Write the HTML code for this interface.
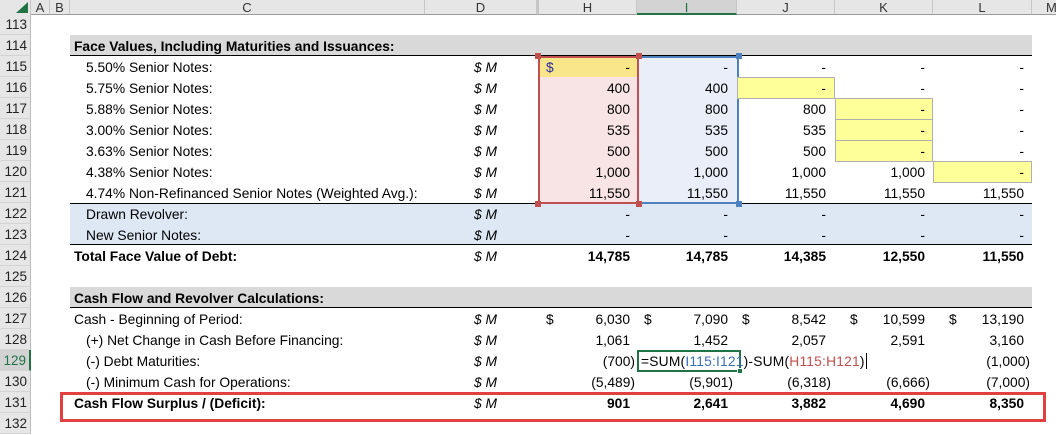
<!DOCTYPE html><html><head><style>
body{margin:0;width:1056px;height:423px;overflow:hidden;background:#fff;font-family:"Liberation Sans",sans-serif;font-size:13.8px;color:#000;position:relative}
div{position:absolute;box-sizing:border-box}
.ch{top:0;height:15px;background:#e6e6e6;border-right:1px solid #c6c6c6;border-bottom:1px solid #9b9b9b;text-align:center;line-height:15px;font-size:13px;color:#333}
.rn{left:0;width:31px;height:21px;background:#e6e6e6;border-right:1px solid #bcbcbc;border-bottom:1px solid #d4d4d4;text-align:right;padding-right:3px;line-height:22px;font-size:13.5px;color:#222}
.t{line-height:23px;height:21px;white-space:nowrap}
.n{line-height:23px;height:21px;text-align:right;white-space:nowrap}
.b{font-weight:bold}
.u{font-style:italic;left:474px}
</style></head><body>
<div class="ch" style="left:0;width:31px"></div>
<div style="left:16px;top:2px;width:0;height:0;border-left:12px solid transparent;border-bottom:11px solid #217346"></div>
<div class="ch" style="left:31px;width:19px">A</div>
<div class="ch" style="left:50px;width:20px">B</div>
<div class="ch" style="left:70px;width:355px">C</div>
<div class="ch" style="left:425px;width:112px">D</div>
<div class="ch" style="left:537px;width:100px;border-left:2px solid #c6c6c6">H</div>
<div class="ch" style="left:637px;width:100px;background:#d3d3d3;border-bottom:2px solid #217346;color:#217346">I</div>
<div class="ch" style="left:737px;width:98px">J</div>
<div class="ch" style="left:835px;width:98px">K</div>
<div class="ch" style="left:933px;width:99px">L</div>
<div class="ch" style="left:1032px;width:30px;text-align:left;padding-left:14px">M</div>

<div class="rn" style="top:14px">113</div><div class="rn" style="top:35px">114</div><div class="rn" style="top:56px">115</div><div class="rn" style="top:77px">116</div><div class="rn" style="top:98px">117</div><div class="rn" style="top:119px">118</div><div class="rn" style="top:140px">119</div><div class="rn" style="top:161px">120</div><div class="rn" style="top:182px">121</div><div class="rn" style="top:203px">122</div><div class="rn" style="top:224px">123</div><div class="rn" style="top:245px">124</div><div class="rn" style="top:266px">125</div><div class="rn" style="top:287px">126</div><div class="rn" style="top:308px">127</div><div class="rn" style="top:329px">128</div><div class="rn" style="top:350px;background:#d3d3d3;color:#217346;border-right:2px solid #217346">129</div><div class="rn" style="top:371px">130</div><div class="rn" style="top:392px">131</div><div class="rn" style="top:413px">132</div>

<div style="left:70px;top:35px;width:962px;height:21px;background:#d9d9d9;border-bottom:1px solid #000"></div>
<div style="left:70px;top:287px;width:962px;height:21px;background:#d9d9d9;border-bottom:1px solid #000"></div>
<div style="left:70px;top:203px;width:962px;height:42px;background:#dde8f4;border-top:1px solid #000;border-bottom:1px solid #000"></div>

<div style="left:538px;top:56px;width:101px;height:148px;background:#f8e4e4"></div>
<div style="left:540px;top:57px;width:97px;height:20px;background:#f9e58a"></div>
<div style="left:639px;top:56px;width:100px;height:148px;background:#e9eef8"></div>
<div style="left:538px;top:56px;width:101px;height:148px;border:2px solid #c0504d"></div>
<div style="left:639px;top:56px;width:100px;height:148px;border:2px solid #4f81bd;border-left:none"></div>
<div style="left:535px;top:53px;width:6px;height:6px;background:#c0504d"></div>
<div style="left:636px;top:53px;width:6px;height:6px;background:#c0504d"></div>
<div style="left:736px;top:53px;width:6px;height:6px;background:#4f81bd"></div>
<div style="left:535px;top:201px;width:6px;height:6px;background:#c0504d"></div>
<div style="left:636px;top:201px;width:6px;height:6px;background:#c0504d"></div>
<div style="left:736px;top:201px;width:6px;height:6px;background:#4f81bd"></div>

<div style="left:737px;top:77px;width:98px;height:22px;background:#ffff99;border:1px solid #b0b0b0"></div>
<div style="left:835px;top:98px;width:98px;height:22px;background:#ffff99;border:1px solid #b0b0b0"></div>
<div style="left:835px;top:119px;width:98px;height:22px;background:#ffff99;border:1px solid #b0b0b0"></div>
<div style="left:835px;top:140px;width:98px;height:22px;background:#ffff99;border:1px solid #b0b0b0"></div>
<div style="left:933px;top:161px;width:99px;height:22px;background:#ffff99;border:1px solid #b0b0b0"></div>

<div class="t b" style="left:74px;top:35px">Face Values, Including Maturities and Issuances:</div>
<div class="t" style="left:86px;top:56px">5.50% Senior Notes:</div>
<div class="t" style="left:86px;top:77px">5.75% Senior Notes:</div>
<div class="t" style="left:86px;top:98px">5.88% Senior Notes:</div>
<div class="t" style="left:86px;top:119px">3.00% Senior Notes:</div>
<div class="t" style="left:86px;top:140px">3.63% Senior Notes:</div>
<div class="t" style="left:86px;top:161px">4.38% Senior Notes:</div>
<div class="t" style="left:86px;top:182px">4.74% Non-Refinanced Senior Notes (Weighted Avg.):</div>
<div class="t" style="left:86px;top:203px">Drawn Revolver:</div>
<div class="t" style="left:86px;top:224px">New Senior Notes:</div>
<div class="t b" style="left:74px;top:245px">Total Face Value of Debt:</div>
<div class="t b" style="left:74px;top:287px">Cash Flow and Revolver Calculations:</div>
<div class="t" style="left:74px;top:308px">Cash - Beginning of Period:</div>
<div class="t" style="left:86px;top:329px">(+) Net Change in Cash Before Financing:</div>
<div class="t" style="left:86px;top:350px">(-) Debt Maturities:</div>
<div class="t" style="left:86px;top:371px">(-) Minimum Cash for Operations:</div>
<div class="t b" style="left:74px;top:392px">Cash Flow Surplus / (Deficit):</div>

<div class="t u" style="top:56px">$ M</div><div class="t u" style="top:77px">$ M</div><div class="t u" style="top:98px">$ M</div><div class="t u" style="top:119px">$ M</div><div class="t u" style="top:140px">$ M</div><div class="t u" style="top:161px">$ M</div><div class="t u" style="top:182px">$ M</div><div class="t u" style="top:203px">$ M</div><div class="t u" style="top:224px">$ M</div><div class="t u" style="top:245px">$ M</div><div class="t u" style="top:308px">$ M</div><div class="t u" style="top:329px">$ M</div><div class="t u" style="top:350px">$ M</div><div class="t u" style="top:371px">$ M</div><div class="t u" style="top:392px">$ M</div>

<div class="t" style="left:546px;top:56px;color:#2a2aa0">$</div>
<div class="n" style="right:426px;top:56px">-</div><div class="n" style="right:328px;top:56px">-</div><div class="n" style="right:230px;top:56px">-</div><div class="n" style="right:131px;top:56px">-</div><div class="n" style="right:32px;top:56px">-</div>
<div class="n" style="right:426px;top:77px">400</div><div class="n" style="right:328px;top:77px">400</div><div class="n" style="right:230px;top:77px">-</div><div class="n" style="right:131px;top:77px">-</div><div class="n" style="right:32px;top:77px">-</div>
<div class="n" style="right:426px;top:98px">800</div><div class="n" style="right:328px;top:98px">800</div><div class="n" style="right:230px;top:98px">800</div><div class="n" style="right:131px;top:98px">-</div><div class="n" style="right:32px;top:98px">-</div>
<div class="n" style="right:426px;top:119px">535</div><div class="n" style="right:328px;top:119px">535</div><div class="n" style="right:230px;top:119px">535</div><div class="n" style="right:131px;top:119px">-</div><div class="n" style="right:32px;top:119px">-</div>
<div class="n" style="right:426px;top:140px">500</div><div class="n" style="right:328px;top:140px">500</div><div class="n" style="right:230px;top:140px">500</div><div class="n" style="right:131px;top:140px">-</div><div class="n" style="right:32px;top:140px">-</div>
<div class="n" style="right:426px;top:161px">1,000</div><div class="n" style="right:328px;top:161px">1,000</div><div class="n" style="right:230px;top:161px">1,000</div><div class="n" style="right:131px;top:161px">1,000</div><div class="n" style="right:32px;top:161px">-</div>
<div class="n" style="right:426px;top:182px">11,550</div><div class="n" style="right:328px;top:182px">11,550</div><div class="n" style="right:230px;top:182px">11,550</div><div class="n" style="right:131px;top:182px">11,550</div><div class="n" style="right:32px;top:182px">11,550</div>
<div class="n" style="right:426px;top:203px">-</div><div class="n" style="right:328px;top:203px">-</div><div class="n" style="right:230px;top:203px">-</div><div class="n" style="right:131px;top:203px">-</div><div class="n" style="right:32px;top:203px">-</div>
<div class="n" style="right:426px;top:224px">-</div><div class="n" style="right:328px;top:224px">-</div><div class="n" style="right:230px;top:224px">-</div><div class="n" style="right:131px;top:224px">-</div><div class="n" style="right:32px;top:224px">-</div>
<div class="n b" style="right:426px;top:245px">14,785</div><div class="n b" style="right:328px;top:245px">14,785</div><div class="n b" style="right:230px;top:245px">14,385</div><div class="n b" style="right:131px;top:245px">12,550</div><div class="n b" style="right:32px;top:245px">11,550</div>

<div class="t" style="left:546px;top:308px">$</div><div class="t" style="left:644px;top:308px">$</div><div class="t" style="left:742px;top:308px">$</div><div class="t" style="left:850px;top:308px">$</div><div class="t" style="left:949px;top:308px">$</div>
<div class="n" style="right:426px;top:308px">6,030</div><div class="n" style="right:328px;top:308px">7,090</div><div class="n" style="right:230px;top:308px">8,542</div><div class="n" style="right:131px;top:308px">10,599</div><div class="n" style="right:32px;top:308px">13,190</div>
<div class="n" style="right:426px;top:329px">1,061</div><div class="n" style="right:328px;top:329px">1,452</div><div class="n" style="right:230px;top:329px">2,057</div><div class="n" style="right:131px;top:329px">2,591</div><div class="n" style="right:32px;top:329px">3,160</div>
<div class="n" style="right:421px;top:350px">(700)</div><div class="n" style="right:26px;top:350px">(1,000)</div>
<div style="left:637px;top:350px;width:104px;height:22px;border:2px solid #217346"></div>
<div style="left:737px;top:368px;width:6px;height:6px;background:#217346;border:1px solid #fff"></div>
<div class="t" style="left:641px;top:350px;letter-spacing:0.2px">=SUM(<span style="color:#3c6eb4">I115:I121</span>)-SUM(<span style="color:#c0504d">H115:H121</span>)</div>
<div style="left:866px;top:353px;width:1px;height:16px;background:#000"></div>
<div class="n" style="right:421px;top:371px">(5,489)</div><div class="n" style="right:323px;top:371px">(5,901)</div><div class="n" style="right:225px;top:371px">(6,318)</div><div class="n" style="right:126px;top:371px">(6,666)</div><div class="n" style="right:26px;top:371px">(7,000)</div>
<div class="n b" style="right:426px;top:392px">901</div><div class="n b" style="right:328px;top:392px">2,641</div><div class="n b" style="right:230px;top:392px">3,882</div><div class="n b" style="right:131px;top:392px">4,690</div><div class="n b" style="right:32px;top:392px">8,350</div>
<div style="left:60px;top:392px;width:986px;height:30px;border:3px solid #e0403f"></div>
</body></html>
